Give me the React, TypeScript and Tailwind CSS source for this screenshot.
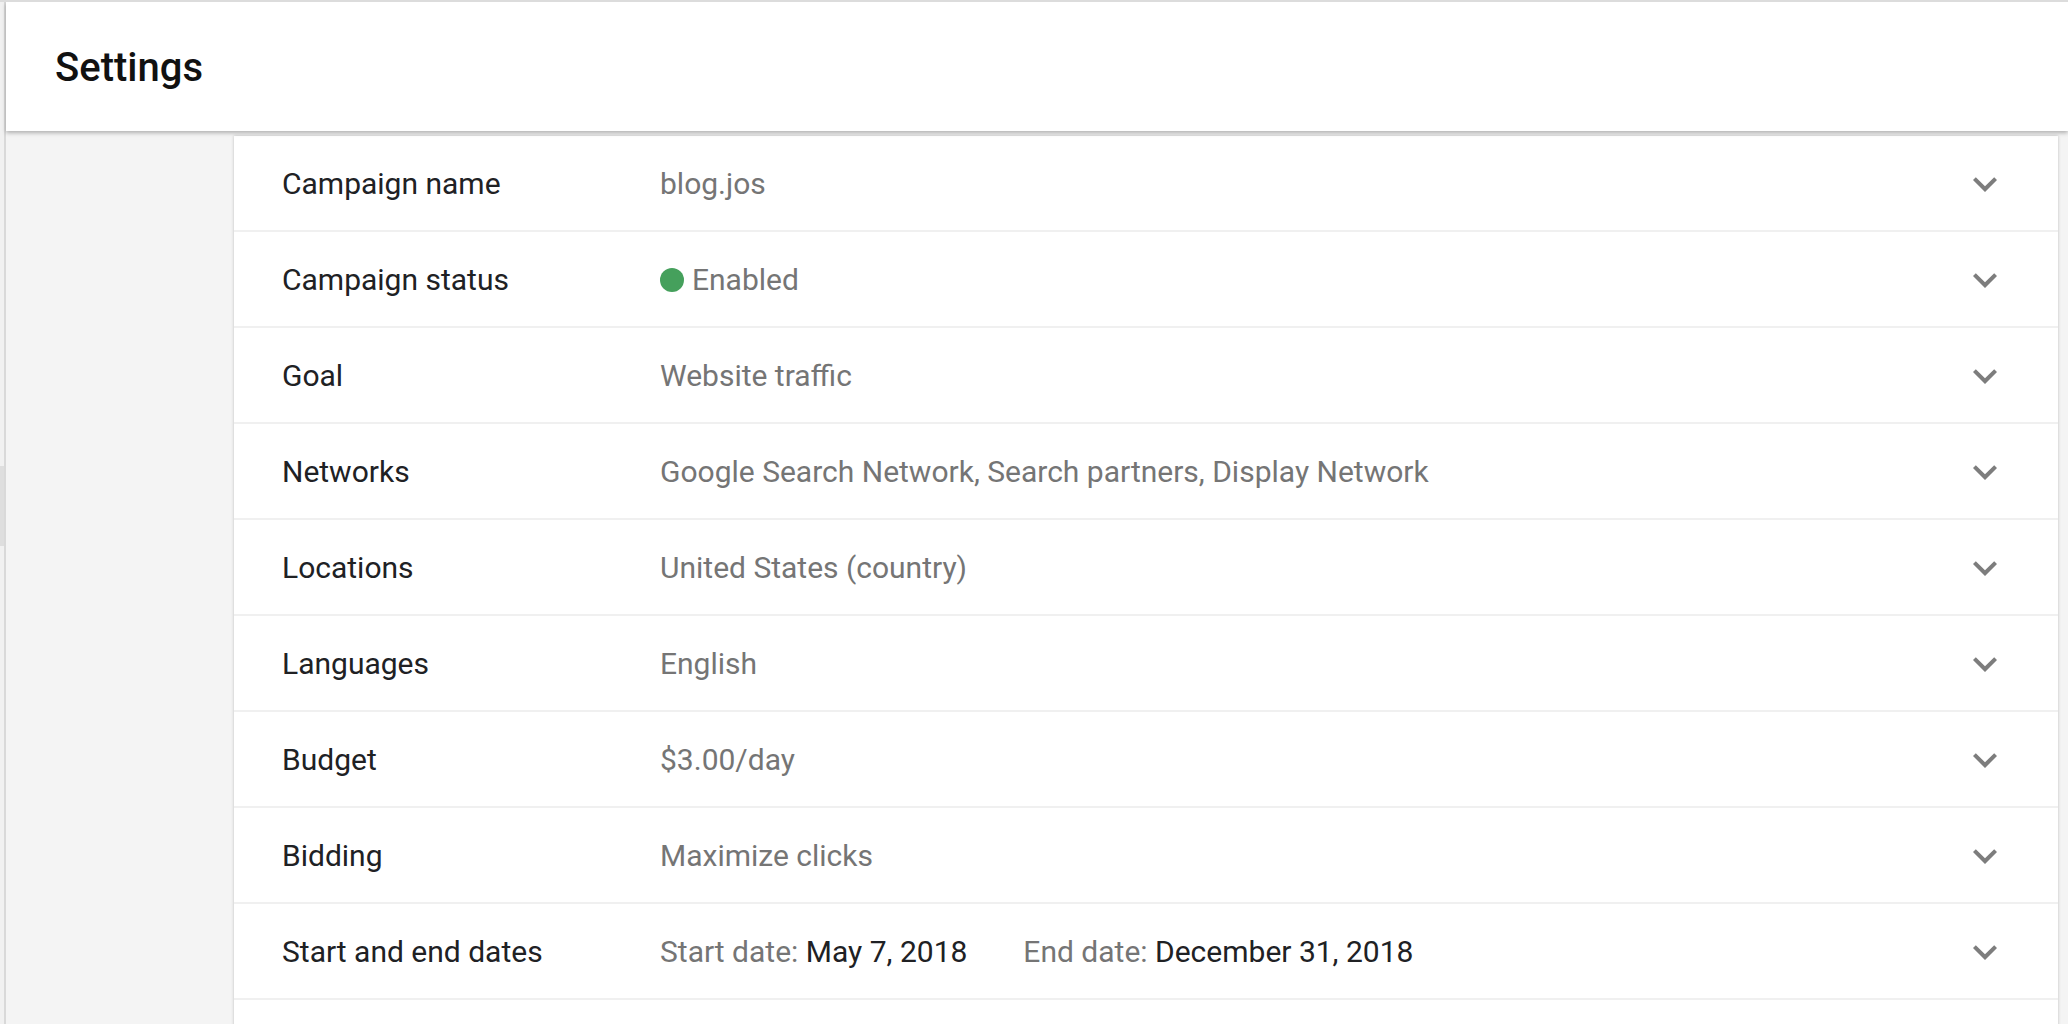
import React from 'react'

type Row = { label: string; value: React.ReactNode }

function Chevron() {
  return (
    <svg viewBox="0 0 24 24" className="h-12 w-12 shrink-0" fill="#7d7d7d">
      <path d="M16.59 8.59L12 13.17 7.41 8.59 6 10l6 6 6-6z" />
    </svg>
  )
}

const rows: Row[] = [
  { label: 'Campaign name', value: 'blog.jos' },
  {
    label: 'Campaign status',
    value: (
      <span className="flex items-center">
        <span className="mr-[8px] inline-block h-[24px] w-[24px] rounded-full bg-[#45a05c]" />
        Enabled
      </span>
    ),
  },
  { label: 'Goal', value: 'Website traffic' },
  { label: 'Networks', value: 'Google Search Network, Search partners, Display Network' },
  { label: 'Locations', value: 'United States (country)' },
  { label: 'Languages', value: 'English' },
  { label: 'Budget', value: '$3.00/day' },
  { label: 'Bidding', value: 'Maximize clicks' },
  {
    label: 'Start and end dates',
    value: (
      <span>
        Start date: <span className="text-[#202124]">May 7, 2018</span>
        <span className="ml-[56px]">End date: </span>
        <span className="text-[#202124]">December 31, 2018</span>
      </span>
    ),
  },
]

export default function App() {
  return (
    <div
      className="flex h-[1024px] w-full overflow-hidden border-t-2 border-[#dcdcdc] bg-[#f4f4f4]"
      style={{ fontFamily: 'Roboto, "Noto Sans", Arial, sans-serif' }}
    >
      {/* outer scroll rail */}
      <div className="flex w-[4px] shrink-0 flex-col bg-[#f1f1f1]">
        <div className="mt-[464px] h-[80px] bg-[#dedede]" />
      </div>
      <div className="w-[2px] shrink-0 bg-[#d9d9d9]" />

      <div className="flex min-w-0 flex-1 flex-col">
        <header className="relative z-10 flex h-[129px] shrink-0 items-center bg-white px-[49px] pt-[2px] shadow-[0_2px_4px_rgba(0,0,0,0.28)]">
          <h1 className="text-[40px] font-medium text-[#111111]">Settings</h1>
        </header>

        <div className="flex flex-1 pl-[228px] pr-[10px] pt-[5px]">
          <div className="flex-1 bg-white shadow-[0_0_3px_rgba(0,0,0,0.22)]">
            {rows.map((row) => (
              <div
                key={row.label}
                className="flex h-[96px] items-center border-b-2 border-[#f0f0f0] pl-12 pr-[49px] pt-[1px] text-[30px]"
              >
                <div className="w-[378px] shrink-0 text-[#202124]">{row.label}</div>
                <div className="flex-1 text-[#757575]">{row.value}</div>
                <Chevron />
              </div>
            ))}
            <div className="h-[96px]" />
          </div>
        </div>
      </div>
    </div>
  )
}
